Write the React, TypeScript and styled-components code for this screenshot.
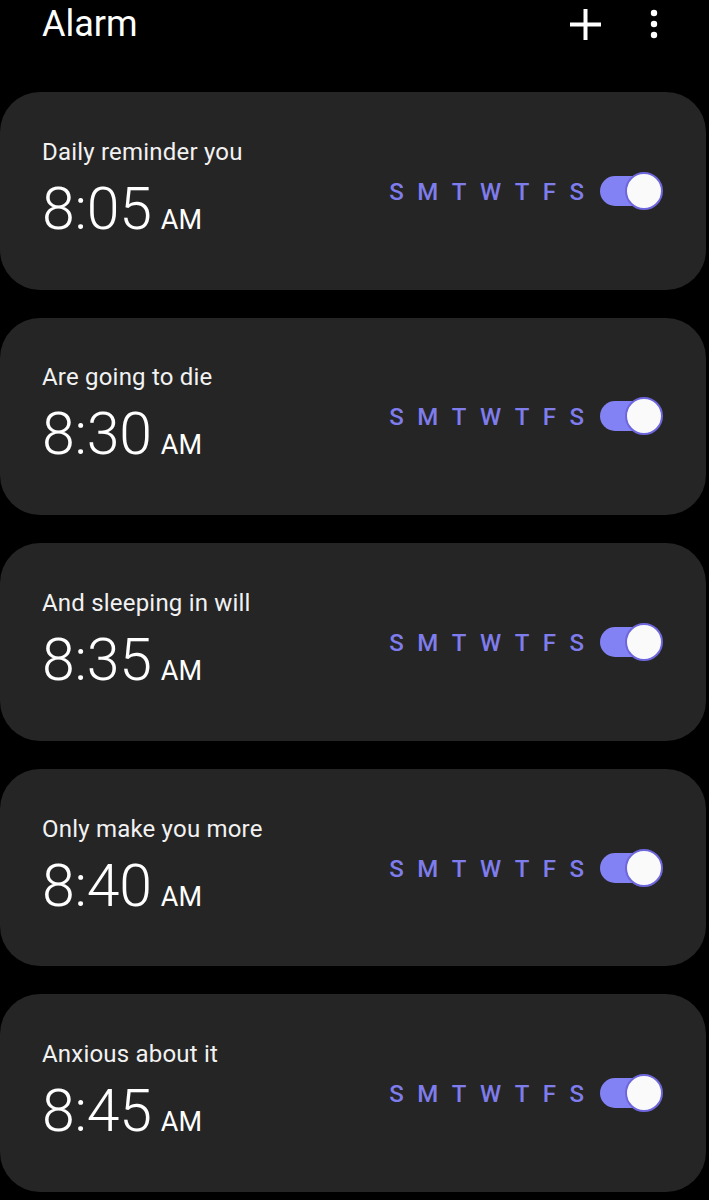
import React from "react";
import styled, { createGlobalStyle } from "styled-components";

const Global = createGlobalStyle`
  html, body { margin: 0; padding: 0; background: #000; }
  body { font-family: Roboto, "Noto Sans", "Liberation Sans", sans-serif; color: #fff; }
`;

const Page = styled.div`
  width: 709px;
  min-height: 1200px;
  background: #000;
  display: flex;
  flex-direction: column;
`;

const Header = styled.header`
  height: 92px;
  display: flex;
  align-items: flex-start;
  padding: 2px 0 0 42px;
  box-sizing: border-box;
`;

const Title = styled.h1`
  margin: 0;
  font-size: 36px;
  line-height: 44px;
  font-weight: 400;
  flex: 1;
`;

const Actions = styled.div`
  display: flex;
  align-items: center;
  gap: 49px;
  padding-right: 51px;
  height: 44px;
`;

const IconButton = styled.button`
  background: none;
  border: none;
  padding: 0;
  display: flex;
  color: #fff;
`;

const List = styled.div`
  display: flex;
  flex-direction: column;
  gap: 28px;
  padding-right: 3px;
`;

const Card = styled.div`
  height: 197.6px;
  box-sizing: border-box;
  background: #252525;
  border-radius: 40px;
  display: flex;
  align-items: center;
  padding: 0 43px 0 42px;
`;

const Info = styled.div`
  flex: 1;
  display: flex;
  flex-direction: column;
  gap: 13px;
  margin-top: 6px;
`;

const Label = styled.div`
  font-size: 24px;
  line-height: 28px;
  font-weight: 400;
  letter-spacing: 0.2px;
  color: #f2f2f2;
`;

const TimeRow = styled.div`
  display: flex;
  align-items: baseline;
  gap: 9px;
  line-height: 60px;
`;

const Time = styled.span`
  font-size: 59px;
  font-weight: 300;
  letter-spacing: -0.2px;
`;

const Meridiem = styled.span`
  font-size: 27px;
  font-weight: 400;
`;

const Days = styled.div`
  display: flex;
  gap: 13.5px;
  margin-right: 16px;
  margin-top: 2px;
`;

const Day = styled.span`
  font-size: 24px;
  font-weight: 500;
  color: #7f7cec;
  line-height: 28px;
`;

const Switch = styled.div`
  position: relative;
  width: 63px;
  height: 38px;
  display: flex;
  align-items: center;
`;

const Track = styled.div`
  width: 58px;
  height: 30px;
  border-radius: 15px;
  background: #8282f5;
`;

const Knob = styled.div`
  position: absolute;
  right: 0;
  top: 0;
  width: 34px;
  height: 34px;
  border-radius: 50%;
  background: #fafafa;
  border: 2px solid #6e66dc;
`;

const alarms = [
  { label: "Daily reminder you", time: "8:05" },
  { label: "Are going to die", time: "8:30" },
  { label: "And sleeping in will", time: "8:35" },
  { label: "Only make you more", time: "8:40" },
  { label: "Anxious about it", time: "8:45" },
];

const days = ["S", "M", "T", "W", "T", "F", "S"];

export default function App() {
  return (
    <Page>
      <Global />
      <Header>
        <Title>Alarm</Title>
        <Actions>
          <IconButton aria-label="Add">
            <svg width="31" height="31" viewBox="0 0 31 31">
              <path d="M15.5 0v31M0 15.5h31" stroke="#fff" strokeWidth="4" />
            </svg>
          </IconButton>
          <IconButton aria-label="More">
            <svg width="8" height="30" viewBox="0 0 8 30">
              <circle cx="4" cy="4" r="3.2" fill="#fff" />
              <circle cx="4" cy="15" r="3.2" fill="#fff" />
              <circle cx="4" cy="26" r="3.2" fill="#fff" />
            </svg>
          </IconButton>
        </Actions>
      </Header>
      <List>
        {alarms.map((a, i) => (
          <Card key={i}>
            <Info>
              <Label>{a.label}</Label>
              <TimeRow>
                <Time>{a.time}</Time>
                <Meridiem>AM</Meridiem>
              </TimeRow>
            </Info>
            <Days>
              {days.map((d, j) => (
                <Day key={j}>{d}</Day>
              ))}
            </Days>
            <Switch>
              <Track />
              <Knob />
            </Switch>
          </Card>
        ))}
      </List>
    </Page>
  );
}
